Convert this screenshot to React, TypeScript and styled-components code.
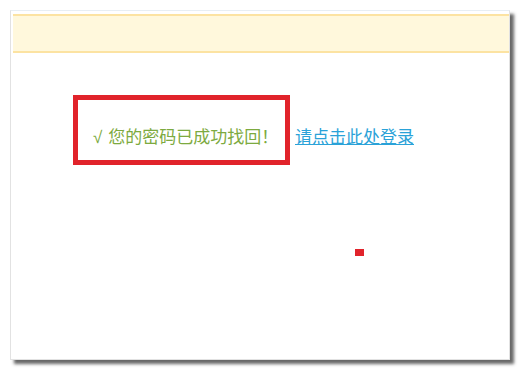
import React from "react";
import styled, { createGlobalStyle } from "styled-components";

const Global = createGlobalStyle`
  html, body {
    margin: 0;
    padding: 0;
    background: #ffffff;
  }
  body {
    font-family: "Liberation Sans", "Noto Sans CJK SC", sans-serif;
  }
`;

const Page = styled.div`
  width: 521px;
  height: 371px;
  padding: 10px 0 0 10px;
  box-sizing: border-box;
`;

const Card = styled.div`
  position: relative;
  width: 500px;
  height: 350px;
  box-sizing: border-box;
  background: #ffffff;
  border: 1px solid #e2e2e2;
  border-top-color: #e8eef3;
  box-shadow: 4px 4px 3px rgba(40, 40, 40, 0.7);
  padding: 3px 0 0 2px;
`;

const Notice = styled.div`
  height: 35px;
  background: #fff8dc;
  border-top: 2px solid #fce3a2;
  border-bottom: 2px solid #fce3a2;
`;

const Body = styled.div`
  display: flex;
  align-items: baseline;
  padding: 42px 0 0 60px;
`;

const Highlight = styled.div`
  width: 217px;
  height: 70px;
  box-sizing: border-box;
  border: 5px solid #e1232b;
  padding: 28px 0 0 15px;
  font-size: 17px;
  line-height: 20px;
  color: #7daa40;
  white-space: nowrap;
`;

const Check = styled.span`
  margin-right: 6px;
`;

const Link = styled.a`
  margin-left: 5px;
  font-size: 17px;
  line-height: 20px;
  color: #2aa2d8;
  text-decoration: underline;
  white-space: nowrap;
  cursor: pointer;
`;

const Marker = styled.span`
  position: absolute;
  left: 344px;
  top: 238px;
  width: 9px;
  height: 7px;
  background: #e1232b;
`;

export default function App() {
  return (
    <>
      <Global />
      <Page>
        <Card>
          <Notice />
          <Body>
            <Highlight>
              <Check>√</Check>您的密码已成功找回！
            </Highlight>
            <Link>请点击此处登录</Link>
          </Body>
          <Marker />
        </Card>
      </Page>
    </>
  );
}
